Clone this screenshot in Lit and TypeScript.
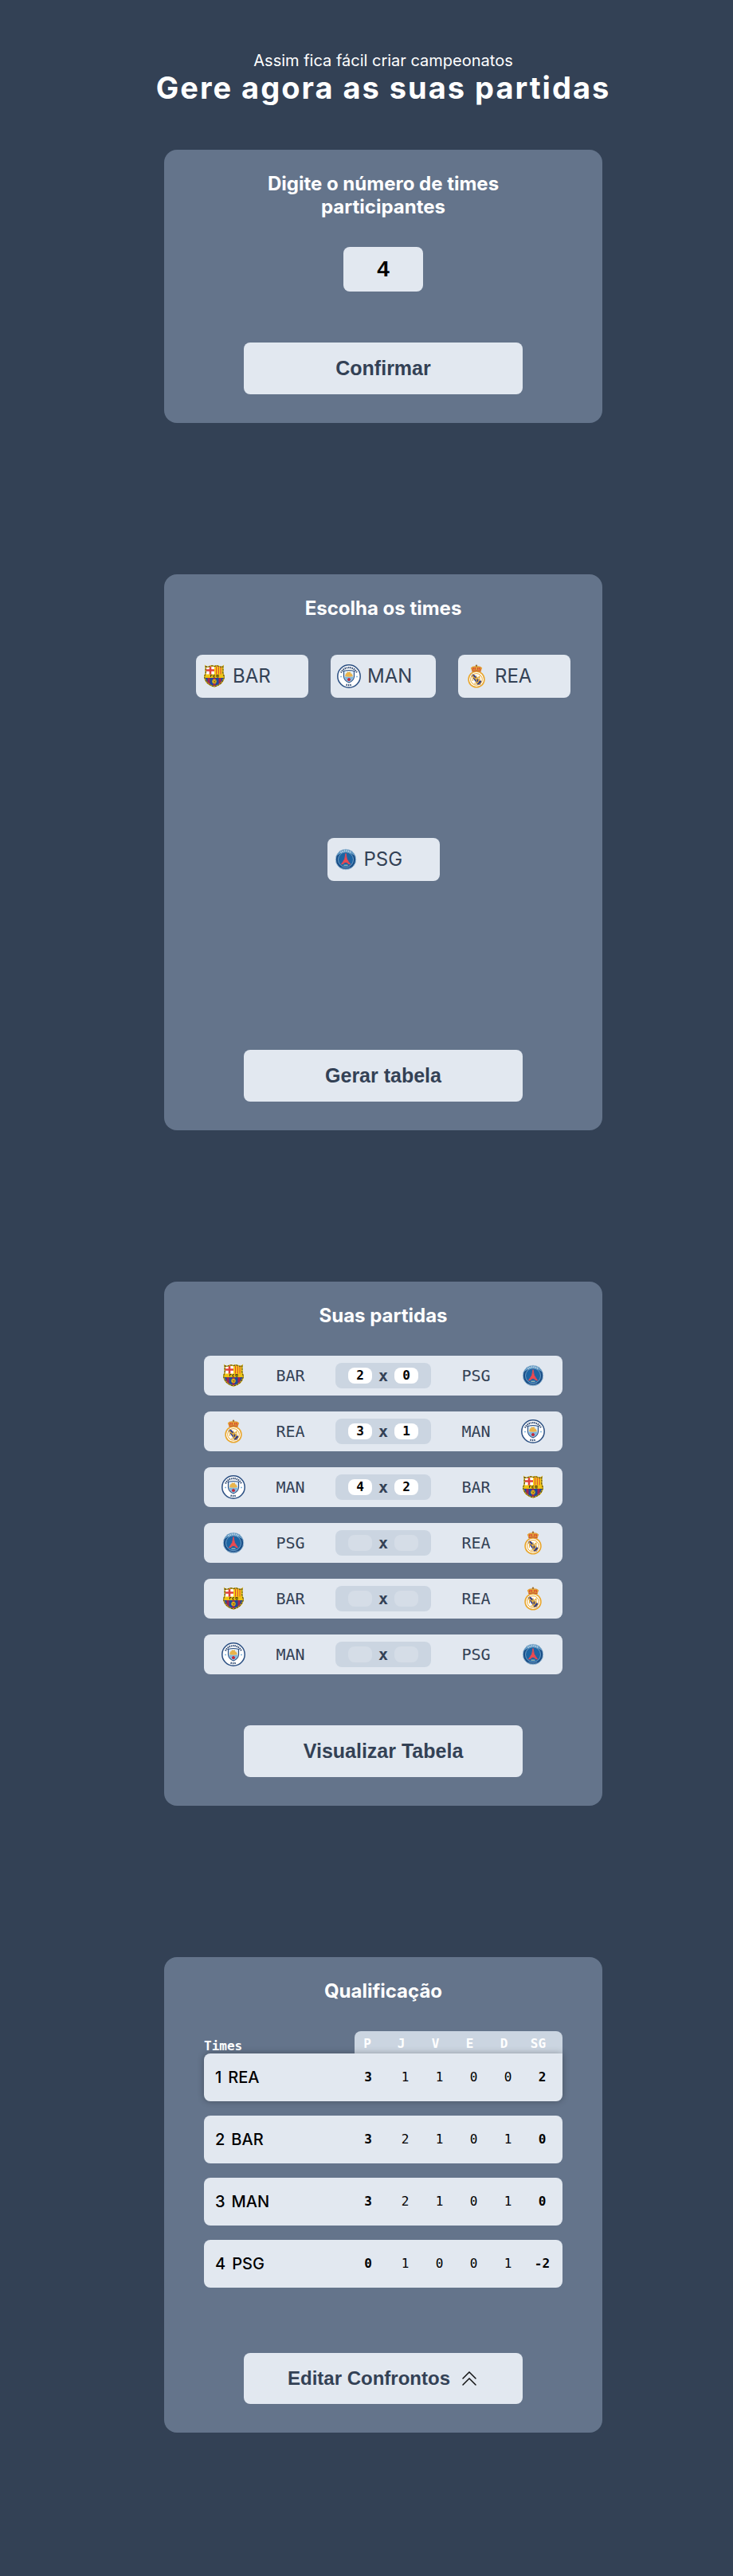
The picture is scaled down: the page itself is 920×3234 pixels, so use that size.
import { LitElement, html, css, svg } from "lit";
import { customElement } from "lit/decorators.js";
import { classMap } from "lit/directives/class-map.js";

type Team = "BAR" | "MAN" | "REA" | "PSG";
interface Match { home: Team; away: Team; homeGoals: string; awayGoals: string; }
interface Row { team: Team; stats: number[]; }

const TEAMS: Team[] = ["BAR", "MAN", "REA", "PSG"];

const MATCHES: Match[] = [
  { home: "BAR", away: "PSG", homeGoals: "2", awayGoals: "0" },
  { home: "REA", away: "MAN", homeGoals: "3", awayGoals: "1" },
  { home: "MAN", away: "BAR", homeGoals: "4", awayGoals: "2" },
  { home: "PSG", away: "REA", homeGoals: "", awayGoals: "" },
  { home: "BAR", away: "REA", homeGoals: "", awayGoals: "" },
  { home: "MAN", away: "PSG", homeGoals: "", awayGoals: "" },
];

const COLUMNS = ["P", "J", "V", "E", "D", "SG"];

const TABLE: Row[] = [
  { team: "REA", stats: [3, 1, 1, 0, 0, 2] },
  { team: "BAR", stats: [3, 2, 1, 0, 1, 0] },
  { team: "MAN", stats: [3, 2, 1, 0, 1, 0] },
  { team: "PSG", stats: [0, 1, 0, 0, 1, -2] },
];

const SHIELD =
  "M4 2.5Q6 4 9 2.6Q12 1.2 15 2.6Q18 1.2 21 2.6Q24 4 26 2.5Q25.5 5 26 7Q25.5 9 26 12Q28.5 16 26 20Q24 25.5 15 28Q6 25.5 4 20Q1.5 16 4 12Q4.5 9 4 7Q4.5 5 4 2.5Z";

const CRESTS = {
  BAR: svg`
    <clipPath id="shield"><path d=${SHIELD}/></clipPath>
    <g clip-path="url(#shield)">
      <path fill="#fff" d="M0 0h15v13H0z"/>
      <path fill="#f9d616" d="M15 0h15v13H15z"/>
      <path stroke="#e0403a" stroke-width="2.6" d="M10 2v11M3 7.5h12"/>
      <path stroke="#dc4a35" stroke-width="1.2" d="M17.5 2v11M20.3 2v11M23.1 2v11"/>
      <path fill="#1d4a9b" d="M0 16h30v14H0z"/>
      <path stroke="#a5264b" stroke-width="3" d="M8 16v14M15 16v14M22 16v14"/>
      <path fill="#edc313" d="M0 12.5h30v4.500H0z"/>
      <path stroke="#4f4213" stroke-width="1.1" d="M10.5 16v-2.500h2M16 13.500q-3 0-2 2.500h2M18 16v-2.500h2v2.500h-2" fill="none"/>
      <circle cx="15" cy="21.5" r="2.7" fill="#e6b719"/>
      <path d="M13.5 20.500l3 2M16.500 20l-2 3.500" stroke="#6f5413" stroke-width=".7"/>
    </g>
    <path d=${SHIELD} fill="none" stroke="#dcb517" stroke-width="1.6"/>
    <path d=${SHIELD} fill="none" stroke="#2b281b" stroke-width=".9" stroke-dasharray="2.4 1.3"/>`,
  MAN: svg`
    <circle cx="15" cy="15" r="14.2" fill="#fff" stroke="#2b4f82" stroke-width="1.5"/>
    <path d="M5 10.500A11 11 0 0 1 25 10.500" fill="none" stroke="#29456f" stroke-width="2.2" stroke-dasharray="1.400 .9"/>
    <path d="M11.5 25.600Q15 26.600 18.500 25.600" fill="none" stroke="#29456f" stroke-width="2.200" stroke-dasharray="1.400 1"/>
    <path d="M8.500 8.500Q15 6.500 21.500 8.500V15.500Q21 20.500 15 23Q9 20.500 8.500 15.500Z" fill="#dfeefa" stroke="#2b4f82" stroke-width="1.2"/>
    <path d="M9.300 15.500h11.400Q20 20.200 15 22.300Q10 20.200 9.300 15.500Z" fill="#83b8de"/>
    <path d="M10 15l1-3.500 1.500-.5.500-2 1.500 1 2-1 .5 2.200 1.500.5 1.500 3.300Q15 16.500 10 15Z" fill="#e9b44b"/>
    <path d="M15 17.500l1.500.8-.3 2h-2.400l-.3-2z" fill="#c4283a" stroke="#c4283a"/>
    <path d="M4 15.500h2M24 15.500h2" stroke="#83b8de" stroke-width="1.600"/>`,
  REA: svg`
    <circle cx="15" cy="18.900" r="9.900" fill="#fff" stroke="#e9a72f" stroke-width="1.600"/>
    <path d="M8.500 14L11 12l10.500 9.500-1.500 4-3.500.5Z" fill="#2f3b8c"/>
    <circle cx="15" cy="18.900" r="7.300" fill="none" stroke="#e9a72f" stroke-width="1"/>
    <path d="M10.500 21v-6l4 4 4.500-4v6M15 14v10M12 24q5 .5 6-3.500 0-3-4-3" fill="none" stroke="#eab13c" stroke-width="1.100"/>
    <path d="M9.700 9.500L7.800 4.500Q10.500 1.500 15 2.500Q19.500 1.500 22.200 4.500L20.300 9.500Q15 8 9.700 9.500Z" fill="#e2a035"/>
    <path d="M10.300 7.200l1-3.200M13.300 6.700V4M16.700 6.700V4M19.700 7.200l-1-3.200" stroke="#d94a37" stroke-width="1.400"/>
    <circle cx="15" cy="1.700" r="1.200" fill="#a06d2d"/>
    <path d="M9.500 8.700Q15 7 20.500 8.700" fill="none" stroke="#be4c37" stroke-width="1"/>`,
  PSG: svg`
    <circle cx="15" cy="15" r="12.800" fill="#1a4f88" stroke="#a9c6dc" stroke-width=".9"/>
    <path d="M3.500 10.500A12.400 12.400 0 0 1 26.500 10.500Q20 6 15 6.500Q9 6 3.500 10.500Z" fill="#659dc7"/>
    <circle cx="15" cy="15.200" r="9.500" fill="#1d64a3" stroke="#78a5c9" stroke-width=".9"/>
    <path d="M8.500 6.300A11 11 0 0 1 21.500 6.300" fill="none" stroke="#c3d8e8" stroke-width="2" stroke-dasharray="1.200 1.200"/>
    <path d="M15 7.500Q15 15 9.500 21L12 20.300Q13.500 18.300 15 18.300T18 20.300L20.500 21Q15 15 15 7.500Z" fill="#ee4a50" stroke="#ee4a50" stroke-width=".9"/>
    <path d="M12.500 16.600h5" stroke="#ee4a50" stroke-width="1.400"/>
    <path d="M12.500 22.200h5" stroke="#cbd8b8" stroke-width="1"/>
    <path d="M9.500 25.200Q15 27.500 20.500 25.200" fill="none" stroke="#8eb4d3" stroke-width="1" stroke-dasharray="1 1"/>`,
};

@customElement("team-crest")
class TeamCrest extends LitElement {
  static properties = { team: {} };
  declare team: Team;
  static styles = css`
    :host { display: block; flex: none; width: 30px; height: 30px; }
    svg { display: block; width: 100%; height: 100%; }
  `;
  render() {
    return html`<svg viewBox="0 0 30 30" aria-hidden="true">${CRESTS[this.team]}</svg>`;
  }
}

@customElement("app-root")
class AppRoot extends LitElement {
  static styles = css`
    :host {
      display: block;
      min-height: 100vh;
      box-sizing: border-box;
      padding: 64px 0 180px 42px;
      background: #334155;
      color: #fff;
      font-family: Inter, sans-serif;
    }
    * { box-sizing: border-box; }
    h1, h2, p, ul { margin: 0; padding: 0; }
    ul { list-style: none; }
    main { display: flex; flex-direction: column; align-items: center; gap: 190px; }
    .intro { text-align: center; margin-bottom: 56px; }
    .intro p { font-size: 20px; line-height: 24px; }
    .intro h1 { font-size: 38px; line-height: 44px; letter-spacing: 2px; font-weight: 700; }
    .card {
      width: 100%;
      max-width: 550px;
      padding: 28px 50px 36px;
      border-radius: 16px;
      background: #64748b;
      display: flex;
      flex-direction: column;
      align-items: center;
    }
    h2 { max-width: 350px; font-size: 24px; line-height: 29px; font-weight: 700; text-align: center; }
    .count {
      width: 100px;
      height: 56px;
      margin: 36px 0 64px;
      border: 0;
      border-radius: 8px;
      background: #e2e8f0;
      color: #000;
      font: 700 28px/32px "Liberation Sans", Arial, sans-serif;
      text-align: center;
    }
    .action {
      width: 100%;
      max-width: 350px;
      padding: 18px 0;
      border: 0;
      border-radius: 8px;
      background: #e2e8f0;
      color: #334155;
      font: 700 25px/29px "Liberation Sans", Arial, sans-serif;
      display: flex;
      align-items: center;
      justify-content: center;
      gap: 12px;
    }
    .action.edit { font-size: 24px; line-height: 28px; }
    .action svg { width: 24px; height: 24px; }

    .teams {
      align-self: stretch;
      margin: 44px -10px 36px;
      display: flex;
      flex-wrap: wrap;
      justify-content: center;
      column-gap: 28px;
    }
    .teams li { height: 230px; }
    .team {
      width: 141px;
      height: 54px;
      padding: 0 8px;
      border: 0;
      border-radius: 8px;
      background: #e2e8f0;
      color: #334155;
      font: 400 24px/30px Inter, sans-serif;
      display: flex;
      align-items: center;
      gap: 8px;
    }
    .team.tight { width: 132px; }

    .matches {
      align-self: stretch;
      display: flex;
      flex-direction: column;
      gap: 20px;
      margin: 36px 0 64px;
    }
    .match {
      height: 50px;
      padding: 0 22px;
      border-radius: 8px;
      background: #e2e8f0;
      color: #334155;
      display: grid;
      grid-template-columns: 30px 1fr 120px 1fr 30px;
      align-items: center;
      font: 400 20px/24px "DejaVu Sans Mono", monospace;
      text-align: center;
    }
    .score {
      height: 32px;
      border-radius: 8px;
      background: #cbd5e1;
      display: flex;
      align-items: center;
      justify-content: center;
      gap: 8px;
      font-weight: 700;
    }
    .score input {
      width: 30px;
      height: 20px;
      padding: 0;
      border: 0;
      border-radius: 8px;
      background: #fff;
      color: #000;
      text-align: center;
      font: 700 16px/20px "DejaVu Sans Mono", monospace;
    }
    .score input:disabled { background: #d5dde7; }

    .ranking { display: block; align-self: stretch; margin: 36px 0 82px; }
    .ranking thead { display: block; }
    .ranking tbody { display: flex; flex-direction: column; gap: 18px; }
    .ranking tr { display: grid; grid-template-columns: 1fr 42px 43px 43px 43px 43px 47px; }
    .ranking th, .ranking td { padding: 0; font: 400 16px/20px "DejaVu Sans Mono", monospace; }
    .ranking thead th {
      height: 28px;
      padding: 6px 10px 2px 0;
      background: #cbd5e1;
      font-weight: 700;
      text-align: center;
    }
    .ranking thead th:first-child { padding: 10px 0 0; background: none; text-align: left; line-height: 18px; }
    .ranking thead th:nth-child(2) { border-top-left-radius: 8px; }
    .ranking thead th:last-child { padding-right: 14px; border-top-right-radius: 8px; }
    .ranking tbody tr {
      height: 60px;
      align-items: center;
      border-radius: 8px;
      background: #e2e8f0;
      color: #000;
    }
    .ranking tbody tr:first-child { border-top-right-radius: 0; box-shadow: 0 0 8px rgba(0, 0, 0, 0.3); }
    .ranking tbody th {
      display: flex;
      gap: 8px;
      padding-left: 14px;
      font: 500 20px/24px Inter, sans-serif;
    }
    .ranking td { text-align: center; }
    .ranking td:nth-child(2) { padding-right: 8px; font-weight: 700; }
    .ranking td:last-child { padding-right: 4px; font-weight: 700; }
  `;

  private goals(value: string, label: string) {
    return html`<input aria-label=${label} inputmode="numeric" .value=${value} ?disabled=${value === ""} />`;
  }

  render() {
    return html`
      <header class="intro">
        <p>Assim fica fácil criar campeonatos</p>
        <h1>Gere agora as suas partidas</h1>
      </header>
      <main>
        <section class="card">
          <h2><label for="count">Digite o número de times participantes</label></h2>
          <input class="count" id="count" inputmode="numeric" value="4" />
          <button class="action">Confirmar</button>
        </section>

        <section class="card">
          <h2>Escolha os times</h2>
          <ul class="teams">
            ${TEAMS.map((team) => html`
              <li>
                <button class=${classMap({ team: true, tight: team === "MAN" })}>
                  <team-crest .team=${team}></team-crest>${team}
                </button>
              </li>`)}
          </ul>
          <button class="action">Gerar tabela</button>
        </section>

        <section class="card">
          <h2>Suas partidas</h2>
          <ul class="matches">
            ${MATCHES.map((m) => html`
              <li class="match">
                <team-crest .team=${m.home}></team-crest>
                <span>${m.home}</span>
                <span class="score">
                  ${this.goals(m.homeGoals, `Gols ${m.home}`)}<span>x</span>${this.goals(m.awayGoals, `Gols ${m.away}`)}
                </span>
                <span>${m.away}</span>
                <team-crest .team=${m.away}></team-crest>
              </li>`)}
          </ul>
          <button class="action">Visualizar Tabela</button>
        </section>

        <section class="card">
          <h2>Qualificação</h2>
          <table class="ranking">
            <thead>
              <tr><th scope="col">Times</th>${COLUMNS.map((c) => html`<th scope="col">${c}</th>`)}</tr>
            </thead>
            <tbody>
              ${TABLE.map((row, i) => html`
                <tr>
                  <th scope="row"><span>${i + 1}</span><span>${row.team}</span></th>
                  ${row.stats.map((n) => html`<td>${n}</td>`)}
                </tr>`)}
            </tbody>
          </table>
          <button class="action edit">
            Editar Confrontos
            <svg viewBox="0 0 24 24" fill="none" stroke="#111" stroke-width="1.5" stroke-linecap="round" aria-hidden="true">
              <path d="M4 12L12 4L20 12M4 20L12 12L20 20" />
            </svg>
          </button>
        </section>
      </main>`;
  }
}
